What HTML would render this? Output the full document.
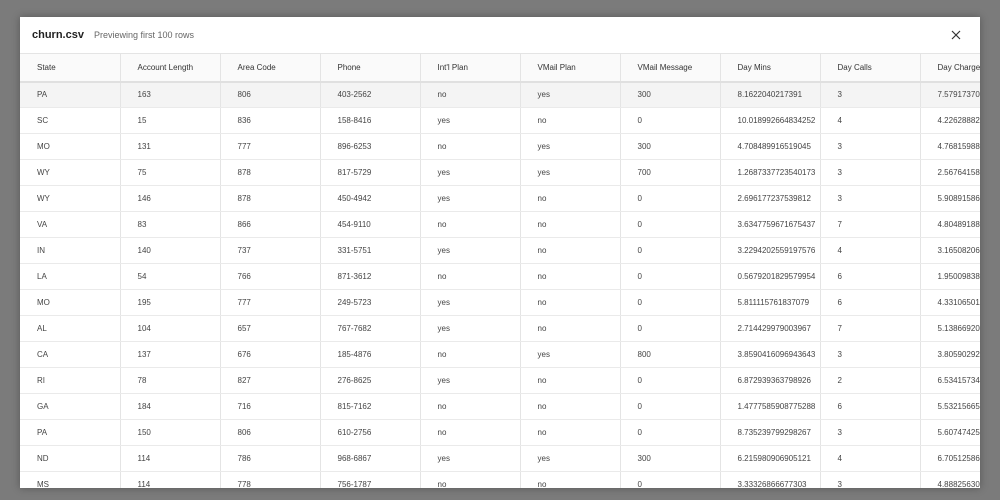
<!DOCTYPE html>
<html><head><style>
body{margin:0;width:1000px;height:500px;background:#7b7b7b;overflow:hidden;font-family:"Liberation Sans",sans-serif;}
.m{position:absolute;left:20px;top:17px;width:960px;height:471px;background:#fff;overflow:hidden;box-shadow:0 0 8px rgba(0,0,0,.3);}
.h{position:absolute;left:12px;top:12px;font-size:11px;color:#222;font-weight:bold;}
.h span{font-weight:normal;color:#666;font-size:9px;margin-left:10px;}
.x{position:absolute;left:931px;top:13px;}
table{position:absolute;left:0;top:36px;border-collapse:collapse;table-layout:fixed;width:1000px;font-size:8px;color:#444;}
td,th{width:100px;box-sizing:border-box;padding:0 0 0 17px;height:26px;border-right:1px solid #e4e4e4;border-bottom:1px solid #eaeaea;text-align:left;white-space:nowrap;overflow:hidden;}
th{font-weight:normal;color:#333;background:#fafafa;height:28px;border-top:1px solid #e4e4e4;border-bottom:2px solid #e0e0e0;}
tr.s td{background:#f4f4f4;}
</style></head><body>
<div class="m">
<div class="h">churn.csv<span>Previewing first 100 rows</span></div>
<svg class="x" width="10" height="10" viewBox="0 0 10 10"><path d="M1 1L9 9M9 1L1 9" stroke="#333" stroke-width="1.2"/></svg>
<table>
<tr><th>State</th><th>Account Length</th><th>Area Code</th><th>Phone</th><th>Int'l Plan</th><th>VMail Plan</th><th>VMail Message</th><th>Day Mins</th><th>Day Calls</th><th>Day Charge</th></tr>
<tr class="s"><td>PA</td><td>163</td><td>806</td><td>403-2562</td><td>no</td><td>yes</td><td>300</td><td>8.1622040217391</td><td>3</td><td>7.5791737033</td></tr>
<tr><td>SC</td><td>15</td><td>836</td><td>158-8416</td><td>yes</td><td>no</td><td>0</td><td>10.018992664834252</td><td>4</td><td>4.2262888221</td></tr>
<tr><td>MO</td><td>131</td><td>777</td><td>896-6253</td><td>no</td><td>yes</td><td>300</td><td>4.708489916519045</td><td>3</td><td>4.7681598823</td></tr>
<tr><td>WY</td><td>75</td><td>878</td><td>817-5729</td><td>yes</td><td>yes</td><td>700</td><td>1.2687337723540173</td><td>3</td><td>2.5676415851</td></tr>
<tr><td>WY</td><td>146</td><td>878</td><td>450-4942</td><td>yes</td><td>no</td><td>0</td><td>2.696177237539812</td><td>3</td><td>5.9089158681</td></tr>
<tr><td>VA</td><td>83</td><td>866</td><td>454-9110</td><td>no</td><td>no</td><td>0</td><td>3.6347759671675437</td><td>7</td><td>4.8048918863</td></tr>
<tr><td>IN</td><td>140</td><td>737</td><td>331-5751</td><td>yes</td><td>no</td><td>0</td><td>3.2294202559197576</td><td>4</td><td>3.1650820603</td></tr>
<tr><td>LA</td><td>54</td><td>766</td><td>871-3612</td><td>no</td><td>no</td><td>0</td><td>0.5679201829579954</td><td>6</td><td>1.9500983887</td></tr>
<tr><td>MO</td><td>195</td><td>777</td><td>249-5723</td><td>yes</td><td>no</td><td>0</td><td>5.811115761837079</td><td>6</td><td>4.3310650161</td></tr>
<tr><td>AL</td><td>104</td><td>657</td><td>767-7682</td><td>yes</td><td>no</td><td>0</td><td>2.714429979003967</td><td>7</td><td>5.1386692032</td></tr>
<tr><td>CA</td><td>137</td><td>676</td><td>185-4876</td><td>no</td><td>yes</td><td>800</td><td>3.8590416096943643</td><td>3</td><td>3.8059029201</td></tr>
<tr><td>RI</td><td>78</td><td>827</td><td>276-8625</td><td>yes</td><td>no</td><td>0</td><td>6.872939363798926</td><td>2</td><td>6.5341573441</td></tr>
<tr><td>GA</td><td>184</td><td>716</td><td>815-7162</td><td>no</td><td>no</td><td>0</td><td>1.4777585908775288</td><td>6</td><td>5.5321566531</td></tr>
<tr><td>PA</td><td>150</td><td>806</td><td>610-2756</td><td>no</td><td>no</td><td>0</td><td>8.735239799298267</td><td>3</td><td>5.6074742581</td></tr>
<tr><td>ND</td><td>114</td><td>786</td><td>968-6867</td><td>yes</td><td>yes</td><td>300</td><td>6.215980906905121</td><td>4</td><td>6.7051258661</td></tr>
<tr><td>MS</td><td>114</td><td>778</td><td>756-1787</td><td>no</td><td>no</td><td>0</td><td>3.33326866677303</td><td>3</td><td>4.8882563091</td></tr>
</table>
</div>
</body></html>
